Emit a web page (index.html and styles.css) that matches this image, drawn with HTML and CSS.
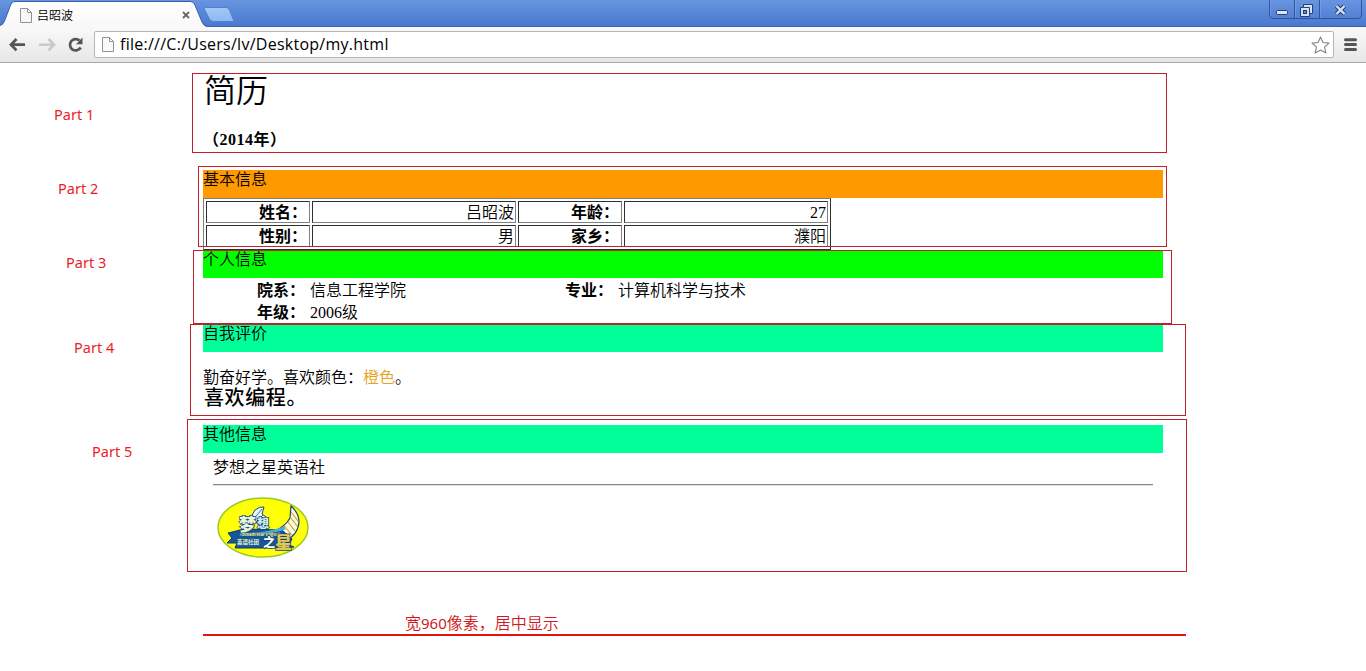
FILE: index.html
```
<!DOCTYPE html>
<html lang="zh-CN">
<head>
<meta charset="utf-8">
<title>吕昭波</title>
<link rel="stylesheet" href="styles.css">
</head>
<body>
<header class="browser">
  <div class="tabstrip">
    <svg class="tab-shapes" width="240" height="27" viewBox="0 0 240 27">
      <defs>
        <linearGradient id="tab" x1="0" y1="0" x2="0" y2="1"><stop offset="0" stop-color="#fff"/><stop offset="1" stop-color="#f8f8f8"/></linearGradient>
        <linearGradient id="plus" x1="0" y1="0" x2="0" y2="1"><stop offset="0" stop-color="#a3c8f8"/><stop offset="1" stop-color="#8db8f2"/></linearGradient>
      </defs>
      <path d="M0 27V25.500Q3 25 4.500 21L11 4Q12 1.500 15 1.500H190Q193 1.500 194.500 4L202 22Q203.500 26 207 26V27Z" fill="url(#tab)" stroke="#3a5ea8"/>
      <path d="M0 26.500H205" stroke="#f9f9f9"/>
      <path d="M205.500 7.500H226Q228.500 7.500 229.500 10L234 21.500H213.500Q210.500 21.500 209.500 19L204.500 9.500Q203.500 7.500 205.500 7.500Z" fill="url(#plus)" stroke="#5581c8"/>
    </svg>
    <div class="tab">
      <svg width="12" height="15" viewBox="0 0 12 15"><path d="M.5.500H7.500L11.500 4.500V14.500H.5Z M7.500.500V4.500H11.500" fill="#f7f7f7" stroke="#929292"/></svg>
      <span class="tab-title">吕昭波</span>
      <svg class="tab-close" width="8" height="8" viewBox="0 0 8 8"><path d="M1 1L7 7M7 1L1 7" stroke="#666" stroke-width="1.800"/></svg>
    </div>
    <svg class="winbtns" width="94" height="20" viewBox="0 0 94 20">
      <path d="M.5 0V15Q.5 18.500 4 18.500H89Q92.500 18.500 92.500 15V0M25.500 0V18M50.500 0V18" fill="none" stroke="#2f559e"/>
      <path d="M1.500 0V15.500M26.500 0V17.500M51.500 0V17.500" stroke="#80a5e5" opacity=".6"/>
      <rect x="7.500" y="10.500" width="11" height="4" rx="1" fill="#d9e6fb" stroke="#263f74"/>
      <path d="M34.500 4.500H43.500V13.500H40.500V16.500H31.500V7.500H34.500Z" fill="#d2e1f8" stroke="#263f74"/>
      <path d="M34.500 7.500H40.500V13.500" fill="none" stroke="#263f74"/>
      <rect x="34.500" y="10.500" width="3" height="3" fill="#5c87d2" stroke="#263f74"/>
      <path d="M67.500 6L75.500 14M75.500 6L67.500 14" stroke="#263f74" stroke-width="4.400"/>
      <path d="M67.500 6L75.500 14M75.500 6L67.500 14" stroke="#d5e3fa" stroke-width="2.400"/>
    </svg>
  </div>
  <div class="toolbar">
    <svg class="nav" width="80" height="20" viewBox="0 0 80 20">
      <path d="M8.500 4L3 9.700L8.500 15.400M3.500 9.700H17" fill="none" stroke="#555" stroke-width="2.800"/>
      <path d="M40.500 4L46 9.700L40.500 15.400M45.500 9.700H31" fill="none" stroke="#c9c9c9" stroke-width="2.600"/>
      <path d="M71.500 5.500A5.700 5.700 0 1 0 72.700 12.500" fill="none" stroke="#555" stroke-width="2.700"/>
      <path d="M74.500 2.500V9.200H68Z" fill="#555"/>
    </svg>
    <div class="address">
      <svg width="12" height="15" viewBox="0 0 12 15"><path d="M.5.500H7.500L11.500 4.500V14.500H.5Z M7.500.500V4.500H11.500" fill="#fafafa" stroke="#929292"/></svg>
      <span class="url">file:///C:/Users/lv/Desktop/my.html</span>
      <svg width="19" height="18" viewBox="0 0 19 18"><path d="M9.500 1L11.900 6.500L18 7.100L13.500 11.200L14.900 17L9.500 13.900L4.100 17L5.500 11.200L1 7.100L7.100 6.500Z" fill="#fff" stroke="#858585" stroke-width="1.100" stroke-linejoin="round"/></svg>
    </div>
    <svg class="menu" width="13" height="13" viewBox="0 0 13 13"><path d="M1.500 1.800H11.500M1.500 6.600H11.500M1.500 11.400H11.500" stroke="#555" stroke-width="3" stroke-linecap="round"/></svg>
  </div>
</header>

<main class="resume">
  <div class="intro">
    <h1>简历</h1>
    <p class="year">（2014年）</p>
  </div>

  <section>
    <h2 class="bar bar-basic">基本信息</h2>
    <table class="basic">
      <tr><th>姓名：</th><td>吕昭波</td><th>年龄：</th><td>27</td></tr>
      <tr><th>性别：</th><td>男</td><th>家乡：</th><td>濮阳</td></tr>
    </table>
  </section>

  <section>
    <h2 class="bar bar-personal">个人信息</h2>
    <dl class="personal">
      <dt>院系：</dt><dd>信息工程学院</dd><dt>专业：</dt><dd>计算机科学与技术</dd>
      <dt>年级：</dt><dd>2006级</dd>
    </dl>
  </section>

  <section>
    <h2 class="bar bar-mint">自我评价</h2>
    <div class="review">
      <p>勤奋好学。喜欢颜色：<span class="orange">橙色</span>。</p>
      <p class="hobby">喜欢编程。</p>
    </div>
  </section>

  <section>
    <h2 class="bar bar-mint">其他信息</h2>
    <div class="other">
      <p>梦想之星英语社</p>
      <hr>
      <svg class="logo" width="92" height="61" viewBox="0 0 92 61">
        <ellipse cx="46" cy="30.500" rx="45" ry="29.500" fill="#ffff05" stroke="#9acb25" stroke-width="1.500"/>
        <path d="M32 23L38 13Q43 9 47 10L45 17L49 20L43 27Z" fill="#e9f5f8" stroke="#174a75"/>
        <path d="M36 23L45 12M39 25L46 18" stroke="#2878a3"/>
        <path d="M55 36Q69 29 73 21L74 9Q82 16 82 25Q81 38 68 44Z" fill="#fffbd5" stroke="#174a75" stroke-width="1.200"/>
        <path d="M74 15L81 24M73 20L80 29M71 25L78 34M67 29L75 38" stroke="#c39d48" stroke-width="1.100"/>
        <path d="M11 36L27 32L65 33L75 42L72 48L77 50L51 51L18 51L20 46L10 46L15 41Z" fill="#17569a" stroke="#0c3a72"/>
        <path d="M23 37Q43 39 68 31" fill="none" stroke="#48b0df" stroke-width="3"/>
        <text class="logo-dream" x="22" y="34">梦</text>
        <text class="logo-think" x="40" y="31">想</text>
        <text class="logo-english" x="25" y="39">Dream Star English</text>
        <text class="logo-club" x="20" y="47">英语社团</text>
        <text class="logo-of" x="46" y="50">之</text>
        <text class="logo-star" x="58" y="52">星</text>
      </svg>
    </div>
  </section>
</main>

<div class="annotations">
  <div class="frame frame-1"></div><div class="frame frame-2"></div><div class="frame frame-3"></div><div class="frame frame-4"></div><div class="frame frame-5"></div>
  <span class="note note-1">Part 1</span><span class="note note-2">Part 2</span><span class="note note-3">Part 3</span><span class="note note-4">Part 4</span><span class="note note-5">Part 5</span>
  <span class="width-note">宽<span class="num">960</span>像素，居中显示</span>
  <div class="ruler"></div>
</div>
</body>
</html>
```

FILE: styles.css
```
* { box-sizing: border-box; }
body {
  position: relative;
  margin: 0;
  height: 671px;
  overflow: hidden;
  background: #fff;
  color: #000;
  font: 350 16px/20px "Liberation Serif", "Noto Sans CJK SC", serif;
}
h1, h2, p, dl, dd { margin: 0; }

/* Browser window */
.browser { height: 63px; }
.tabstrip {
  position: relative;
  display: flex;
  justify-content: space-between;
  height: 27px;
  background: linear-gradient(#6795e0, #4a78cf);
  border-bottom: 1px solid #3b62ac;
}
.tab-shapes { position: absolute; left: 0; top: 0; }
.tab {
  position: relative;
  display: flex;
  align-items: center;
  width: 191px;
  height: 27px;
  padding: 3px 0 0 20px;
  font: 350 12px/16px "Noto Sans CJK SC", sans-serif;
}
.tab-title { margin: -1px 0 0 5px; }
.tab-close { margin: 0 1px 0 auto; }
.winbtns { margin-right: 3px; }
.toolbar {
  display: flex;
  align-items: center;
  height: 36px;
  padding: 0 9px 0 8px;
  background: linear-gradient(#f9f9f9, #e7e7e7);
  border-bottom: 1px solid #a8a8a8;
}
.nav { margin-right: 6px; }
.address {
  display: flex;
  flex: 1;
  align-items: center;
  height: 27px;
  padding: 0 3px 0 7px;
  background: #fff;
  border: 1px solid #b5b5b5;
  border-radius: 2px;
}
.url { flex: 1; margin: -1px 0 0 6px; font: 400 16px/20px "Open Sans", "Noto Sans", sans-serif; letter-spacing: 0.26px; }
.menu { margin-left: 10px; }

/* Resume page */
.resume { width: 960px; margin-left: 203px; }
.intro { height: 107px; padding-top: 8px; }
h1 { padding-left: 1px; font-weight: 350; font-size: 32px; line-height: 40px; }
.year { margin-top: 19px; font-weight: 700; letter-spacing: 0.5px; }
.bar { height: 28px; font-size: 16px; line-height: 20px; font-weight: 350; }
.bar-basic { background: #ff9900; }
.bar-personal { background: #00ff00; }
.bar-mint { background: #00ff99; }
.basic {
  width: 628px;
  height: 52px;
  table-layout: fixed;
  border: 1px solid;
  border-color: #808080 #303030 #303030 #808080;
  border-spacing: 2px;
}
.basic th, .basic td {
  height: 22px;
  padding: 1px 1px 0;
  border: 1px solid;
  border-color: #303030 #808080 #808080 #303030;
  text-align: right;
  line-height: 19px;
}
.basic th { width: 104px; padding-right: 2px; font-weight: 700; }
.basic td { width: 204px; }
.personal {
  display: grid;
  grid-template-columns: 102px 206px 102px 1fr;
  grid-auto-rows: 22px;
  height: 46px;
  padding-top: 2px;
  line-height: 22px;
}
.personal dt { font-weight: 700; text-align: right; }
.personal dd { padding-left: 5px; }
.review { height: 73px; padding-top: 16px; }
.orange { color: #e6a21a; }
.hobby { padding-left: 1px; font-weight: 500; font-size: 20px; line-height: 21px; letter-spacing: 0.6px; }
.other { padding: 5px 10px; }
.other hr { height: 2px; margin: 6px 0 11px; border: 0; border-top: 1px solid #888; border-bottom: 1px solid #ddd; }
.logo { display: block; margin-left: 4px; }
.logo text { font-family: "Noto Sans CJK SC", sans-serif; font-weight: 900; paint-order: stroke; stroke: #174775; stroke-width: 1.5px; }
.logo .logo-dream { font-size: 17px; fill: #e8f4db; }
.logo .logo-think { font-size: 12px; fill: #d6edf0; }
.logo .logo-english { font-size: 4px; fill: #e9e88c; stroke-width: .6px; }
.logo .logo-club { font-size: 5.5px; fill: #cfe7c8; stroke-width: .3px; }
.logo .logo-of { font-size: 12px; fill: #fff; }
.logo .logo-star { font-size: 17px; fill: #e2c954; }

/* Hand-drawn markup above the page */
.annotations { position: absolute; inset: 0; }
.frame { position: absolute; border: 1px solid #c0202a; }
.frame-1 { left: 192px; top: 73px; width: 975px; height: 80px; }
.frame-2 { left: 198px; top: 166px; width: 969px; height: 81px; }
.frame-3 { left: 193px; top: 250px; width: 979px; height: 74px; }
.frame-4 { left: 190px; top: 324px; width: 996px; height: 92px; }
.frame-5 { left: 187px; top: 419px; width: 1000px; height: 153px; }
.note { position: absolute; color: #ed1c24; font: 400 14.5px/20px "Noto Sans", "Open Sans", sans-serif; white-space: nowrap; }
.note-1 { left: 54px; top: 104px; }
.note-2 { left: 58px; top: 178px; }
.note-3 { left: 66px; top: 252px; }
.note-4 { left: 74px; top: 337px; }
.note-5 { left: 92px; top: 441px; }
.width-note { position: absolute; left: 405px; top: 613px; color: #d01822; white-space: nowrap; }
.width-note .num { font: 400 15px/20px "Noto Sans", sans-serif; }
.ruler { position: absolute; left: 203px; top: 634px; width: 983px; height: 2px; background: #e3140f; }
```
